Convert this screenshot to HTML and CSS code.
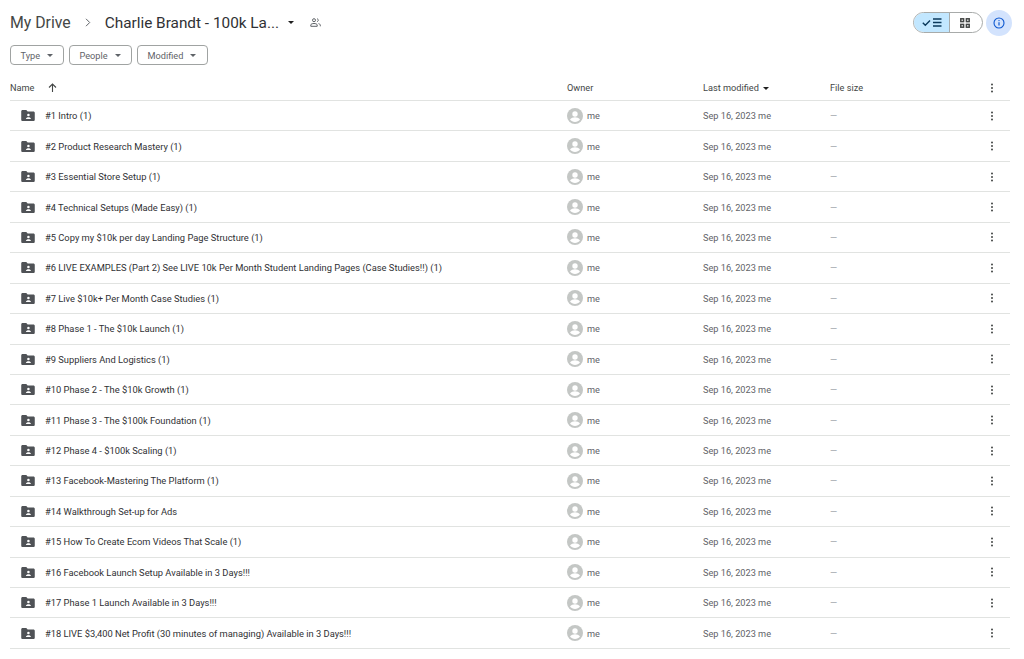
FILE: index.html
```html
<!DOCTYPE html>
<html lang="en">
<head>
    <meta charset="UTF-8">
    <title>Charlie Brandt - Google Drive</title>
    <link rel="stylesheet" href="styles.css">
</head>
<body>
    <svg class="defs" width="0" height="0">
        <symbol id="folder" viewBox="0 0 16 13">
            <path fill="#4f5256" d="M1.500 0H6l1.600 1.700h6.900c.8 0 1.500.7 1.500 1.500v8.300c0 .8-.7 1.500-1.500 1.500h-13C.7 13 0 12.300 0 11.500V1.500C0 .7.7 0 1.500 0z"/>
            <circle fill="#fff" cx="8.500" cy="6" r="1.500"/>
            <path fill="#fff" d="M5.500 10.500c0-1.300 1.700-2 3-2s3 .7 3 2z"/>
        </symbol>
        <symbol id="avatar" viewBox="0 0 16 16">
            <circle fill="#c4c7c5" cx="8" cy="8" r="8"/>
            <circle fill="#fff" cx="8" cy="6" r="2.700"/>
            <path fill="#fff" d="M3 11.600c1-1.600 3.200-2.300 5-2.300s4 .7 5 2.300c-1.100 1.500-3 2.500-5 2.500s-3.900-1-5-2.500z"/>
        </symbol>
        <symbol id="dots" viewBox="0 0 4 10">
            <circle fill="#444746" cx="2" cy="1.500" r="1"/>
            <circle fill="#444746" cx="2" cy="5" r="1"/>
            <circle fill="#444746" cx="2" cy="8.500" r="1"/>
        </symbol>
    </svg>

    <!-- Top bar -->
    <div class="top-bar">
        <div class="crumbs">
            <span class="crumb">My Drive</span>
            <svg class="crumb-sep" width="6" height="9" viewBox="0 0 6 9"><path d="M1 .8l3.700 3.700L1 8.200" fill="none" stroke="#5f6368" stroke-width="1"/></svg>
            <span class="crumb current">Charlie Brandt - 100k La...</span>
            <span class="caret big"></span>
            <svg class="shared" width="11" height="9" viewBox="0 0 11 9"><g fill="none" stroke="#5f6368" stroke-width="1"><circle cx="4" cy="2.200" r="1.500"/><path d="M.8 8.300V7c0-1 1.600-1.500 3.200-1.500S7.200 6 7.200 7v1.300z"/><path d="M7 .8c1 .2 1.300.8 1.300 1.400S8 3.400 7 3.600M8.500 5.600c1 .3 1.800.8 1.800 1.500v1.200"/></g></svg>
        </div>
        <div class="view-tools">
            <div class="view-toggle">
                <div class="toggle-btn active">
                    <svg width="20" height="9" viewBox="0 0 20 9"><path d="M.8 4.800l2.500 2.400L8 2.400" fill="none" stroke="#0b3a5c" stroke-width="1.400"/><path d="M11 1h8.500M11 4.500h8.500M11 8h8.500" stroke="#0b3a5c" stroke-width="1.400"/></svg>
                </div>
                <div class="toggle-btn">
                    <svg width="10" height="10" viewBox="0 0 10 10"><g fill="none" stroke="#444746" stroke-width="1.500"><rect x=".8" y=".8" width="2.800" height="2.800"/><rect x="6.400" y=".8" width="2.800" height="2.800"/><rect x=".8" y="6.400" width="2.800" height="2.800"/><rect x="6.400" y="6.400" width="2.800" height="2.800"/></g></svg>
                </div>
            </div>
            <div class="info-btn">
                <svg width="12" height="12" viewBox="0 0 12 12"><circle cx="6" cy="6" r="5" fill="none" stroke="#0b57d0" stroke-width="1.100"/><path d="M6 5.300v3.200" stroke="#0b57d0" stroke-width="1.200"/><circle cx="6" cy="3.600" r=".7" fill="#0b57d0"/></svg>
            </div>
        </div>
    </div>

    <!-- Filter chips -->
    <div class="filters">
        <div class="chip chip-type">Type <span class="caret"></span></div>
        <div class="chip chip-people">People <span class="caret"></span></div>
        <div class="chip chip-modified">Modified <span class="caret"></span></div>
    </div>

    <!-- File list -->
    <div class="list">
        <div class="row head">
            <div class="name-col">Name
                <svg class="sort-arrow" width="9" height="9" viewBox="0 0 9 9"><path d="M4.500 9V1.500M1 4.500l3.500-3.500L8 4.500" fill="none" stroke="#444746" stroke-width="1.100"/></svg>
            </div>
            <div>Owner</div>
            <div>Last modified <span class="caret dark"></span></div>
            <div>File size</div>
            <div class="more"><svg width="4" height="10"><use href="#dots"/></svg></div>
        </div>
        <div class="row"><div class="name-col"><svg class="folder" width="14" height="11"><use href="#folder"/></svg><span class="file-name">#1 Intro (1)</span></div><div class="owner"><svg width="16" height="16"><use href="#avatar"/></svg>me</div><div>Sep 16, 2023 me</div><div class="dash">—</div><div class="more"><svg width="4" height="10"><use href="#dots"/></svg></div></div>
        <div class="row"><div class="name-col"><svg class="folder" width="14" height="11"><use href="#folder"/></svg><span class="file-name">#2 Product Research Mastery (1)</span></div><div class="owner"><svg width="16" height="16"><use href="#avatar"/></svg>me</div><div>Sep 16, 2023 me</div><div class="dash">—</div><div class="more"><svg width="4" height="10"><use href="#dots"/></svg></div></div>
        <div class="row"><div class="name-col"><svg class="folder" width="14" height="11"><use href="#folder"/></svg><span class="file-name">#3 Essential Store Setup (1)</span></div><div class="owner"><svg width="16" height="16"><use href="#avatar"/></svg>me</div><div>Sep 16, 2023 me</div><div class="dash">—</div><div class="more"><svg width="4" height="10"><use href="#dots"/></svg></div></div>
        <div class="row"><div class="name-col"><svg class="folder" width="14" height="11"><use href="#folder"/></svg><span class="file-name">#4 Technical Setups (Made Easy) (1)</span></div><div class="owner"><svg width="16" height="16"><use href="#avatar"/></svg>me</div><div>Sep 16, 2023 me</div><div class="dash">—</div><div class="more"><svg width="4" height="10"><use href="#dots"/></svg></div></div>
        <div class="row"><div class="name-col"><svg class="folder" width="14" height="11"><use href="#folder"/></svg><span class="file-name">#5 Copy my $10k per day Landing Page Structure (1)</span></div><div class="owner"><svg width="16" height="16"><use href="#avatar"/></svg>me</div><div>Sep 16, 2023 me</div><div class="dash">—</div><div class="more"><svg width="4" height="10"><use href="#dots"/></svg></div></div>
        <div class="row"><div class="name-col"><svg class="folder" width="14" height="11"><use href="#folder"/></svg><span class="file-name">#6 LIVE EXAMPLES (Part 2) See LIVE 10k Per Month Student Landing Pages (Case Studies!!) (1)</span></div><div class="owner"><svg width="16" height="16"><use href="#avatar"/></svg>me</div><div>Sep 16, 2023 me</div><div class="dash">—</div><div class="more"><svg width="4" height="10"><use href="#dots"/></svg></div></div>
        <div class="row"><div class="name-col"><svg class="folder" width="14" height="11"><use href="#folder"/></svg><span class="file-name">#7 Live $10k+ Per Month Case Studies (1)</span></div><div class="owner"><svg width="16" height="16"><use href="#avatar"/></svg>me</div><div>Sep 16, 2023 me</div><div class="dash">—</div><div class="more"><svg width="4" height="10"><use href="#dots"/></svg></div></div>
        <div class="row"><div class="name-col"><svg class="folder" width="14" height="11"><use href="#folder"/></svg><span class="file-name">#8 Phase 1 - The $10k Launch (1)</span></div><div class="owner"><svg width="16" height="16"><use href="#avatar"/></svg>me</div><div>Sep 16, 2023 me</div><div class="dash">—</div><div class="more"><svg width="4" height="10"><use href="#dots"/></svg></div></div>
        <div class="row"><div class="name-col"><svg class="folder" width="14" height="11"><use href="#folder"/></svg><span class="file-name">#9 Suppliers And Logistics (1)</span></div><div class="owner"><svg width="16" height="16"><use href="#avatar"/></svg>me</div><div>Sep 16, 2023 me</div><div class="dash">—</div><div class="more"><svg width="4" height="10"><use href="#dots"/></svg></div></div>
        <div class="row"><div class="name-col"><svg class="folder" width="14" height="11"><use href="#folder"/></svg><span class="file-name">#10 Phase 2 - The $10k Growth (1)</span></div><div class="owner"><svg width="16" height="16"><use href="#avatar"/></svg>me</div><div>Sep 16, 2023 me</div><div class="dash">—</div><div class="more"><svg width="4" height="10"><use href="#dots"/></svg></div></div>
        <div class="row"><div class="name-col"><svg class="folder" width="14" height="11"><use href="#folder"/></svg><span class="file-name">#11 Phase 3 - The $100k Foundation (1)</span></div><div class="owner"><svg width="16" height="16"><use href="#avatar"/></svg>me</div><div>Sep 16, 2023 me</div><div class="dash">—</div><div class="more"><svg width="4" height="10"><use href="#dots"/></svg></div></div>
        <div class="row"><div class="name-col"><svg class="folder" width="14" height="11"><use href="#folder"/></svg><span class="file-name">#12 Phase 4 - $100k Scaling (1)</span></div><div class="owner"><svg width="16" height="16"><use href="#avatar"/></svg>me</div><div>Sep 16, 2023 me</div><div class="dash">—</div><div class="more"><svg width="4" height="10"><use href="#dots"/></svg></div></div>
        <div class="row"><div class="name-col"><svg class="folder" width="14" height="11"><use href="#folder"/></svg><span class="file-name">#13 Facebook-Mastering The Platform (1)</span></div><div class="owner"><svg width="16" height="16"><use href="#avatar"/></svg>me</div><div>Sep 16, 2023 me</div><div class="dash">—</div><div class="more"><svg width="4" height="10"><use href="#dots"/></svg></div></div>
        <div class="row"><div class="name-col"><svg class="folder" width="14" height="11"><use href="#folder"/></svg><span class="file-name">#14 Walkthrough Set-up for Ads</span></div><div class="owner"><svg width="16" height="16"><use href="#avatar"/></svg>me</div><div>Sep 16, 2023 me</div><div class="dash">—</div><div class="more"><svg width="4" height="10"><use href="#dots"/></svg></div></div>
        <div class="row"><div class="name-col"><svg class="folder" width="14" height="11"><use href="#folder"/></svg><span class="file-name">#15 How To Create Ecom Videos That Scale (1)</span></div><div class="owner"><svg width="16" height="16"><use href="#avatar"/></svg>me</div><div>Sep 16, 2023 me</div><div class="dash">—</div><div class="more"><svg width="4" height="10"><use href="#dots"/></svg></div></div>
        <div class="row"><div class="name-col"><svg class="folder" width="14" height="11"><use href="#folder"/></svg><span class="file-name">#16 Facebook Launch Setup Available in 3 Days!!!</span></div><div class="owner"><svg width="16" height="16"><use href="#avatar"/></svg>me</div><div>Sep 16, 2023 me</div><div class="dash">—</div><div class="more"><svg width="4" height="10"><use href="#dots"/></svg></div></div>
        <div class="row"><div class="name-col"><svg class="folder" width="14" height="11"><use href="#folder"/></svg><span class="file-name">#17 Phase 1 Launch Available in 3 Days!!!</span></div><div class="owner"><svg width="16" height="16"><use href="#avatar"/></svg>me</div><div>Sep 16, 2023 me</div><div class="dash">—</div><div class="more"><svg width="4" height="10"><use href="#dots"/></svg></div></div>
        <div class="row"><div class="name-col"><svg class="folder" width="14" height="11"><use href="#folder"/></svg><span class="file-name">#18 LIVE $3,400 Net Profit (30 minutes of managing) Available in 3 Days!!!</span></div><div class="owner"><svg width="16" height="16"><use href="#avatar"/></svg>me</div><div>Sep 16, 2023 me</div><div class="dash">—</div><div class="more"><svg width="4" height="10"><use href="#dots"/></svg></div></div>
    </div>
</body>
</html>
```

FILE: styles.css
```css
* {
    margin: 0;
    padding: 0;
    box-sizing: border-box;
}

html, body {
    height: 659px;
    overflow: hidden;
}

body {
    font-family: Roboto, "Liberation Sans", sans-serif;
    font-size: 9.2px;
    color: #5f6368;
    background-color: #fff;
    padding: 0 14px 0 10px;
}

.defs {
    display: block;
    height: 0;
}

/* Top bar */
.top-bar {
    display: flex;
    justify-content: space-between;
    align-items: center;
    height: 45px;
    margin-right: -2px;
}

.crumbs {
    display: flex;
    align-items: center;
}

.crumb {
    font-size: 15.8px;
    color: #444746;
}

.crumb.current {
    font-size: 15.35px;
    color: #303134;
}

.crumb-sep {
    margin: 0 14px 0 14px;
}

.caret {
    display: inline-block;
    width: 0;
    height: 0;
    margin-left: 4px;
    vertical-align: middle;
    border-left: 3px solid transparent;
    border-right: 3px solid transparent;
    border-top: 3px solid #5f6368;
}

.caret.big {
    margin-left: 9px;
    border-top-color: #1f1f1f;
}

.caret.dark {
    margin-left: 2px;
    border-top-color: #1f1f1f;
}

.shared {
    margin-left: 16px;
}

.view-tools {
    display: flex;
    align-items: center;
    gap: 3px;
}

.view-toggle {
    display: flex;
    width: 70px;
    height: 21px;
    border: 1px solid #a8abaa;
    border-radius: 11px;
    overflow: hidden;
}

.toggle-btn {
    display: flex;
    align-items: center;
    justify-content: center;
    flex: 1;
    padding-right: 2px;
}

.toggle-btn.active {
    flex: none;
    width: 36px;
    padding-right: 0;
    background-color: #c2e7ff;
    border-right: 1px solid #a8abaa;
}

.info-btn {
    display: flex;
    align-items: center;
    justify-content: center;
    width: 26px;
    height: 26px;
    border-radius: 50%;
    background-color: #d3e3fd;
}

/* Filter chips */
.filters {
    display: flex;
    gap: 5px;
}

.chip {
    display: flex;
    align-items: center;
    height: 20px;
    padding-left: 9.5px;
    border: 1px solid #a0a3a2;
    border-radius: 4px;
    color: #5f6368;
}

.chip .caret {
    margin-left: 7px;
}

.chip-type {
    width: 54px;
}

.chip-people {
    width: 63px;
}

.chip-modified {
    width: 71px;
}

/* File list */
.list {
    margin-top: 10px;
}

.row {
    display: grid;
    grid-template-columns: 557px 136px 127px 1fr 36px;
    align-items: center;
    height: 30.44px;
    border-bottom: 1px solid #e1e3e1;
}

.row.head {
    height: 26px;
    color: #444746;
}

.name-col {
    display: flex;
    align-items: center;
    color: #1f1f1f;
}

.head .name-col {
    color: #444746;
}

.sort-arrow {
    margin-left: 14px;
}

.folder {
    margin-left: 11px;
    margin-right: 10px;
}

.file-name {
    font-size: 9.33px;
    white-space: nowrap;
    color: #303134;
}

.owner {
    display: flex;
    align-items: center;
    gap: 4px;
}

.dash {
    color: #9aa0a6;
}

.more {
    display: flex;
    justify-content: center;
}
```
